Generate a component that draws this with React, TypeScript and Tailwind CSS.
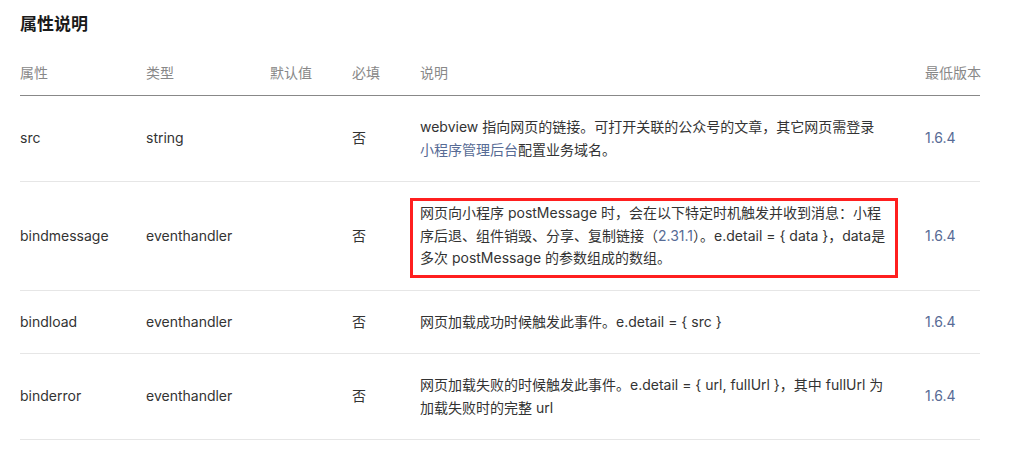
const rows = [
  {
    name: 'src',
    type: 'string',
    def: '',
    required: '否',
    desc: (
      <>
        webview 指向网页的链接。可打开关联的公众号的文章，其它网页需登录
        <span className="whitespace-nowrap text-[#576b95]">小程序管理后台</span>配置业务域名。
      </>
    ),
    version: '1.6.4',
  },
  {
    name: 'bindmessage',
    type: 'eventhandler',
    def: '',
    required: '否',
    marked: true,
    desc: (
      <>
        网页向小程序 postMessage 时，会在以下特定时机触发并收到消息：小程序后退、组件销毁、分享、复制链接（
        <span className="text-[#576b95]">2.31.1</span>）。e.detail = {'{ data }'}，data是多次 postMessage
        的参数组成的数组。
      </>
    ),
    version: '1.6.4',
  },
  {
    name: 'bindload',
    type: 'eventhandler',
    def: '',
    required: '否',
    desc: <>网页加载成功时候触发此事件。e.detail = {'{ src }'}</>,
    version: '1.6.4',
  },
  {
    name: 'binderror',
    type: 'eventhandler',
    def: '',
    required: '否',
    desc: <>网页加载失败的时候触发此事件。e.detail = {'{ url, fullUrl }'}，其中 fullUrl 为加载失败时的完整 url</>,
    version: '1.6.4',
  },
]

const cols = 'grid grid-cols-[126px_124px_82px_68px_505px_1fr]'

export default function App() {
  return (
    <div className="min-h-[455px] bg-white font-['Inter','Noto_Sans_CJK_SC',sans-serif] text-[14px] text-[#333]">
      <div className="ml-5 w-[960px] pt-3">
        <h2 className="text-[17px] font-bold leading-6 text-[#1a1a1a]">属性说明</h2>

        {/* header */}
        <div className={`${cols} mt-[14px] whitespace-nowrap border-b border-[#888] pb-[11px] pt-3 leading-[22px] text-[#888]`}>
          <div>属性</div>
          <div>类型</div>
          <div>默认值</div>
          <div>必填</div>
          <div>说明</div>
          <div>最低版本</div>
        </div>

        {rows.map((row) => (
          <div key={row.name} className={`${cols} items-center border-b border-[#e6e6e6] py-5 leading-[22.5px]`}>
            <div>{row.name}</div>
            <div>{row.type}</div>
            <div>{row.def}</div>
            <div>{row.required}</div>
            <div className="pr-[35px]">
              <div className="relative">
                {row.desc}
                {row.marked && (
                  <span className="pointer-events-none absolute -bottom-[8px] -left-[10px] -right-[8px] -top-[4px] border-[3px] border-[#ff1f1f]" />
                )}
              </div>
            </div>
            <div className="whitespace-nowrap text-[#576b95]">{row.version}</div>
          </div>
        ))}
      </div>
    </div>
  )
}
